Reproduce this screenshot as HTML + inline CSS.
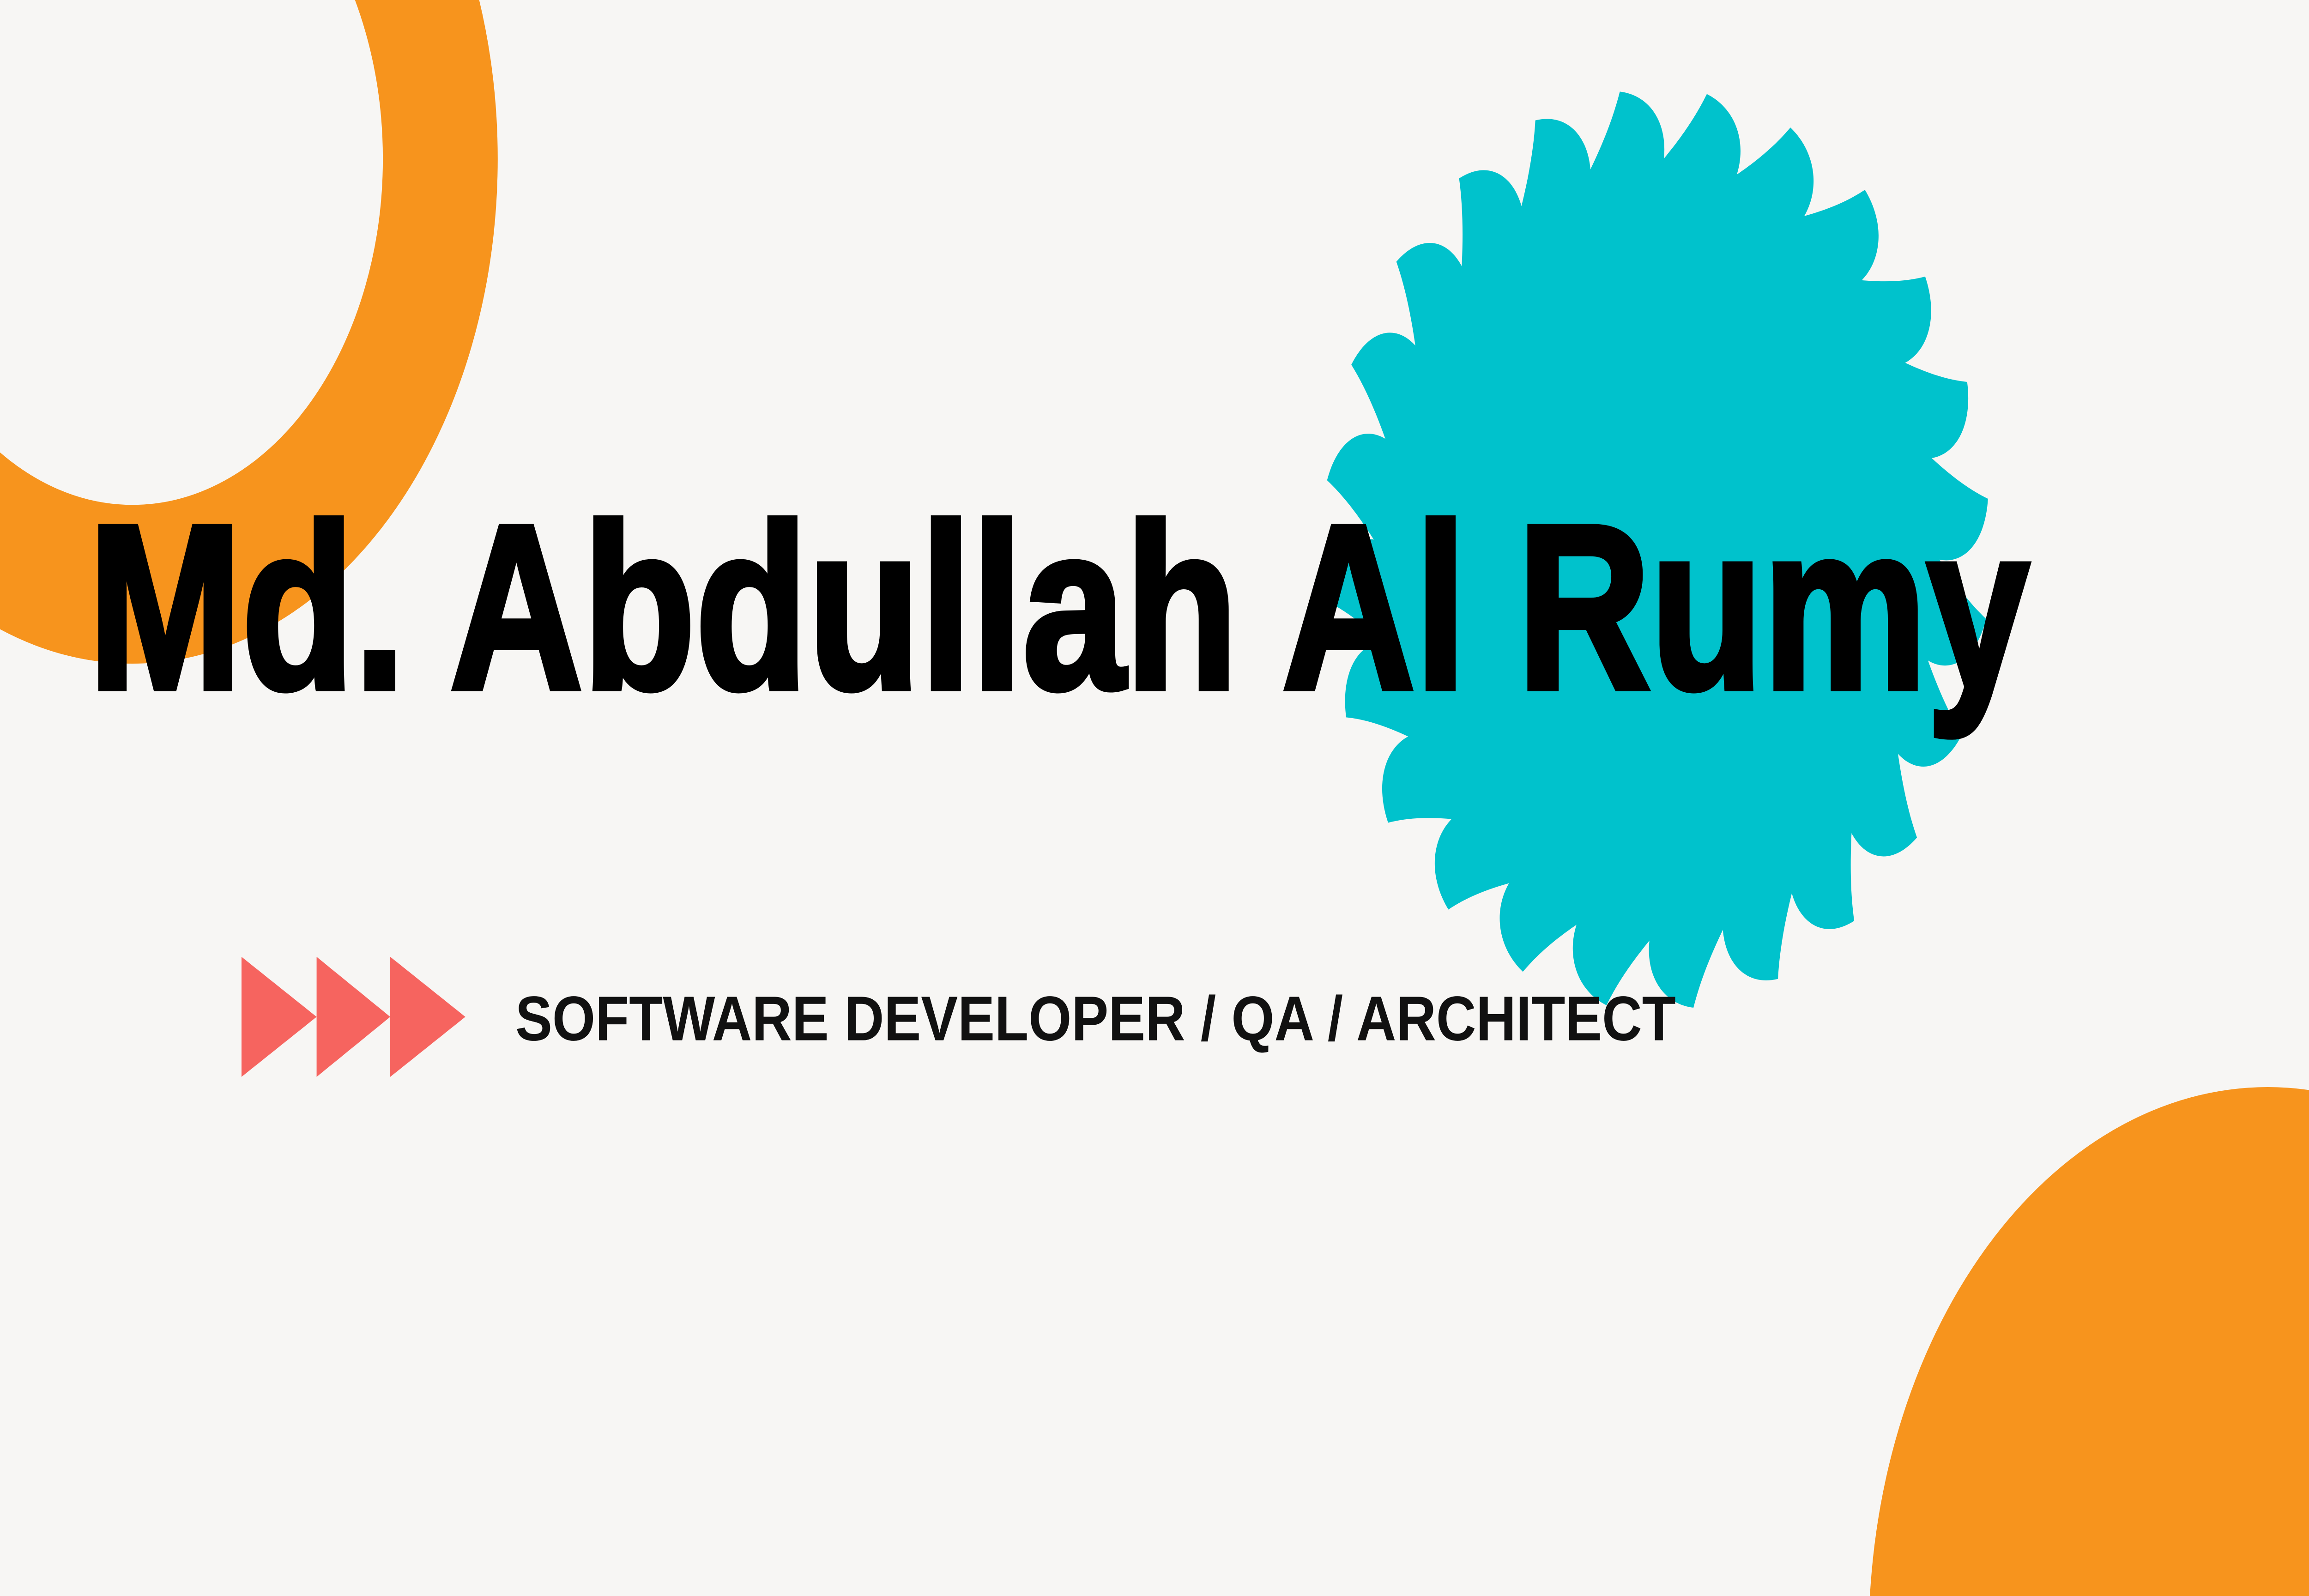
<!DOCTYPE html>
<html><head><meta charset="utf-8"><style>html,body{margin:0;padding:0;background:#f7f6f4;overflow:hidden;width:100%;height:100%}svg{display:block;position:fixed;left:0;top:0;width:100vw;height:100vh}</style></head>
<body>
<svg xmlns="http://www.w3.org/2000/svg" xmlns:xlink="http://www.w3.org/1999/xlink" viewBox="0 0 1568 784" preserveAspectRatio="none">
<rect width="1568" height="784" fill="#f7f6f4"/>
<circle cx="90" cy="78" r="209" fill="none" stroke="#f7941d" stroke-width="78"/>
<circle cx="1540" cy="805" r="271" fill="#f7941d"/>
<defs>
<path id="t" d="M -66,-158 C -45,-185 -32,-205 -25,-225 C 10,-222 18,-185 -19,-158 Z" fill="#00c2cc"/>
</defs>
<g transform="translate(1125,270)">
<circle r="172" fill="#00c2cc"/>
<use xlink:href="#t" transform="rotate(0)"/><use xlink:href="#t" transform="rotate(15)"/><use xlink:href="#t" transform="rotate(30)"/><use xlink:href="#t" transform="rotate(45)"/>
<use xlink:href="#t" transform="rotate(60)"/><use xlink:href="#t" transform="rotate(75)"/><use xlink:href="#t" transform="rotate(90)"/><use xlink:href="#t" transform="rotate(105)"/>
<use xlink:href="#t" transform="rotate(120)"/><use xlink:href="#t" transform="rotate(135)"/><use xlink:href="#t" transform="rotate(150)"/><use xlink:href="#t" transform="rotate(165)"/>
<use xlink:href="#t" transform="rotate(180)"/><use xlink:href="#t" transform="rotate(195)"/><use xlink:href="#t" transform="rotate(210)"/><use xlink:href="#t" transform="rotate(225)"/>
<use xlink:href="#t" transform="rotate(240)"/><use xlink:href="#t" transform="rotate(255)"/><use xlink:href="#t" transform="rotate(270)"/><use xlink:href="#t" transform="rotate(285)"/>
<use xlink:href="#t" transform="rotate(300)"/><use xlink:href="#t" transform="rotate(315)"/><use xlink:href="#t" transform="rotate(330)"/><use xlink:href="#t" transform="rotate(345)"/>
</g>
<text x="60" y="338" font-family="Liberation Sans, sans-serif" font-weight="bold" font-size="115" fill="#000" stroke="#000" stroke-width="3" textLength="1318" lengthAdjust="spacingAndGlyphs">Md. Abdullah Al Rumy</text>
<polygon points="164,470 215,499.5 164,529" fill="#f6645f"/>
<polygon points="215,470 265,499.5 215,529" fill="#f6645f"/>
<polygon points="265,470 316,499.5 265,529" fill="#f6645f"/>
<text x="350" y="511" font-family="Liberation Sans, sans-serif" font-weight="bold" font-size="31" fill="#111" textLength="788" lengthAdjust="spacingAndGlyphs">SOFTWARE DEVELOPER / QA / ARCHITECT</text>
</svg>
</body></html>
